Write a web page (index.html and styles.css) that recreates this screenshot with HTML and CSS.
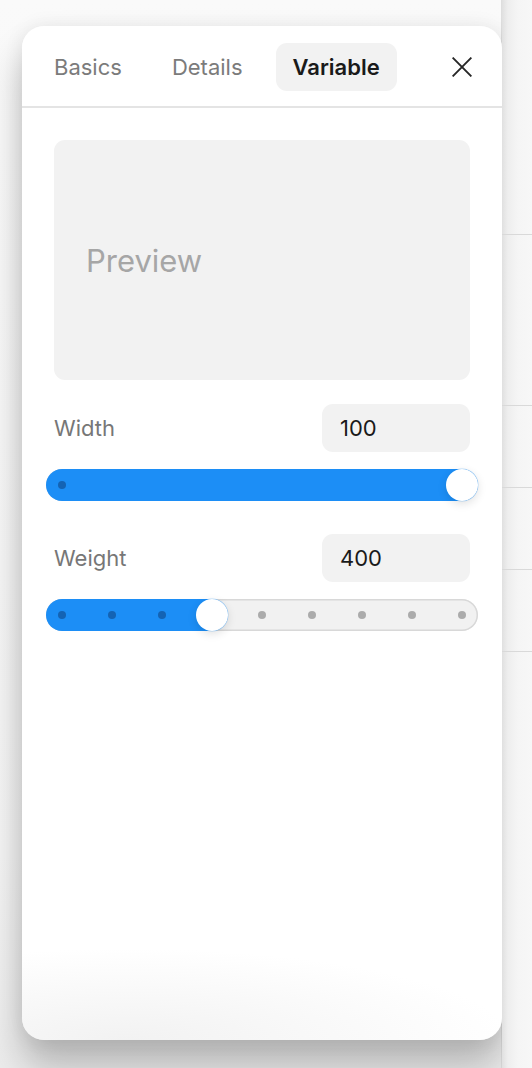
FILE: index.html
```html
<!DOCTYPE html>
<html lang="en">
<head>
<meta charset="utf-8">
<title>Variable</title>
<link rel="stylesheet" href="styles.css">
</head>
<body>
<div class="stage">
  <main class="canvas">
    <section class="panel">
      <header class="panel-head">
        <nav class="tabs">
          <button class="tab">Basics</button>
          <button class="tab">Details</button>
          <button class="tab active">Variable</button>
        </nav>
        <button class="close" aria-label="Close">
          <svg viewBox="0 0 20 20" width="20" height="20"><path d="M0.6 0.6L19.4 19.4M19.4 0.6L0.6 19.4" fill="none" stroke="#262626" stroke-width="1.9"/></svg>
        </button>
      </header>
      <div class="panel-body">
        <div class="preview">Preview</div>

        <div class="control">
          <div class="control-row">
            <span class="label">Width</span>
            <div class="value">100</div>
          </div>
          <div class="slider">
            <div class="fill" style="width:100%"></div>
            <div class="dots">
              <span class="dot on"></span>
            </div>
            <div class="thumb" style="left:400px"></div>
          </div>
        </div>

        <div class="control control-next">
          <div class="control-row">
            <span class="label">Weight</span>
            <div class="value">400</div>
          </div>
          <div class="slider">
            <div class="fill" style="width:182px"></div>
            <div class="dots">
              <span class="dot on"></span>
              <span class="dot on"></span>
              <span class="dot on"></span>
              <span class="dot on"></span>
              <span class="dot"></span>
              <span class="dot"></span>
              <span class="dot"></span>
              <span class="dot"></span>
              <span class="dot"></span>
            </div>
            <div class="thumb" style="left:150px"></div>
          </div>
        </div>
      </div>
    </section>
  </main>
  <aside class="side">
    <div class="side-row r1"></div>
    <div class="side-row r2"></div>
    <div class="side-row r3"></div>
    <div class="side-row r4"></div>
    <div class="side-row r5"></div>
  </aside>
</div>
</body>
</html>
```
FILE: styles.css
```css
* { box-sizing: border-box; }
html, body {
  margin: 0;
  padding: 0;
  width: 532px;
  height: 1068px;
  overflow: hidden;
  font-family: Inter, "Noto Sans", "Liberation Sans", sans-serif;
}
.stage {
  display: flex;
  width: 532px;
  height: 1068px;
}
.canvas {
  width: 502px;
  height: 1068px;
  flex: none;
  background: linear-gradient(to bottom, #fafafa 0%, #f4f4f4 80%, #ececec 100%);
  border-right: 1px solid #dedede;
  padding: 26px 0 0 22px;
}
.panel {
  width: 480px;
  height: 1014px;
  background: radial-gradient(80% 9% at 22% 100%, #f2f2f2 0%, #ffffff 100%);
  border-radius: 22px;
  box-shadow: 0 0 20px rgba(0,0,0,0.07), 0 26px 36px rgba(0,0,0,0.24);
  display: flex;
  flex-direction: column;
  position: relative;
}
.panel-head {
  display: flex;
  align-items: center;
  justify-content: space-between;
  padding: 17px 20px 15px 15px;
  border-bottom: 2px solid #e4e4e4;
}
.tabs {
  display: flex;
  gap: 16px;
}
.tab {
  border: none;
  background: none;
  font: inherit;
  font-size: 22px;
  height: 48px;
  padding: 0 17px;
  border-radius: 11px;
  color: #7b7b7b;
  cursor: pointer;
}
.tab.active {
  background: #f2f2f2;
  color: #1a1a1a;
  font-weight: 600;
}
.close {
  width: 40px;
  height: 40px;
  border: none;
  background: none;
  padding: 0;
  display: flex;
  align-items: center;
  justify-content: center;
}
.panel-body {
  padding: 32px 32px 0;
  display: flex;
  flex-direction: column;
}
.preview {
  height: 240px;
  background: #f2f2f2;
  border-radius: 11px;
  display: flex;
  align-items: center;
  padding-left: 32px;
  font-size: 31px;
  color: #a6a6a6;
  margin-bottom: 24px;
}
.control-next { margin-top: 33px; }
.control-row {
  display: flex;
  align-items: center;
  justify-content: space-between;
  height: 48px;
}
.label {
  font-size: 22px;
  color: #777777;
}
.value {
  width: 148px;
  height: 48px;
  background: #f2f2f2;
  border-radius: 11px;
  font-size: 22px;
  color: #1a1a1a;
  display: flex;
  align-items: center;
  padding-left: 18px;
}
.slider {
  position: relative;
  height: 32px;
  margin: 17px -8px 0;
  border-radius: 16px;
  background: #f1f1f1;
  box-shadow: inset 0 0 0 1.5px #d8d8d8;
}
.fill {
  position: absolute;
  left: 0;
  top: 0;
  bottom: 0;
  background: #1c8ef6;
  border-radius: 16px;
}
.dots {
  position: relative;
  height: 32px;
  display: flex;
  align-items: center;
  justify-content: space-between;
  padding: 0 12px;
}
.dot {
  width: 8px;
  height: 8px;
  border-radius: 50%;
  background: #ababab;
}
.dot.on { background: #1463b4; }
.thumb {
  position: absolute;
  top: 0;
  width: 32px;
  height: 32px;
  border-radius: 50%;
  background: #ffffff;
  box-shadow: 0 0 0 0.5px rgba(28,142,246,0.3), 0 3px 10px rgba(0,0,0,0.12);
}
.side {
  width: 30px;
  height: 1068px;
  flex: none;
  position: relative;
  z-index: 1;
  background: linear-gradient(to right, #e0e0e0 0px, #eeeeee 6px, #f5f5f5 16px, #f7f7f7 30px);
}
.side-row { border-bottom: 1.5px solid #d9d9d9; }
.r1 { height: 235px; }
.r2 { height: 171px; }
.r3 { height: 82px; }
.r4 { height: 82px; }
.r5 { height: 82px; }
```
